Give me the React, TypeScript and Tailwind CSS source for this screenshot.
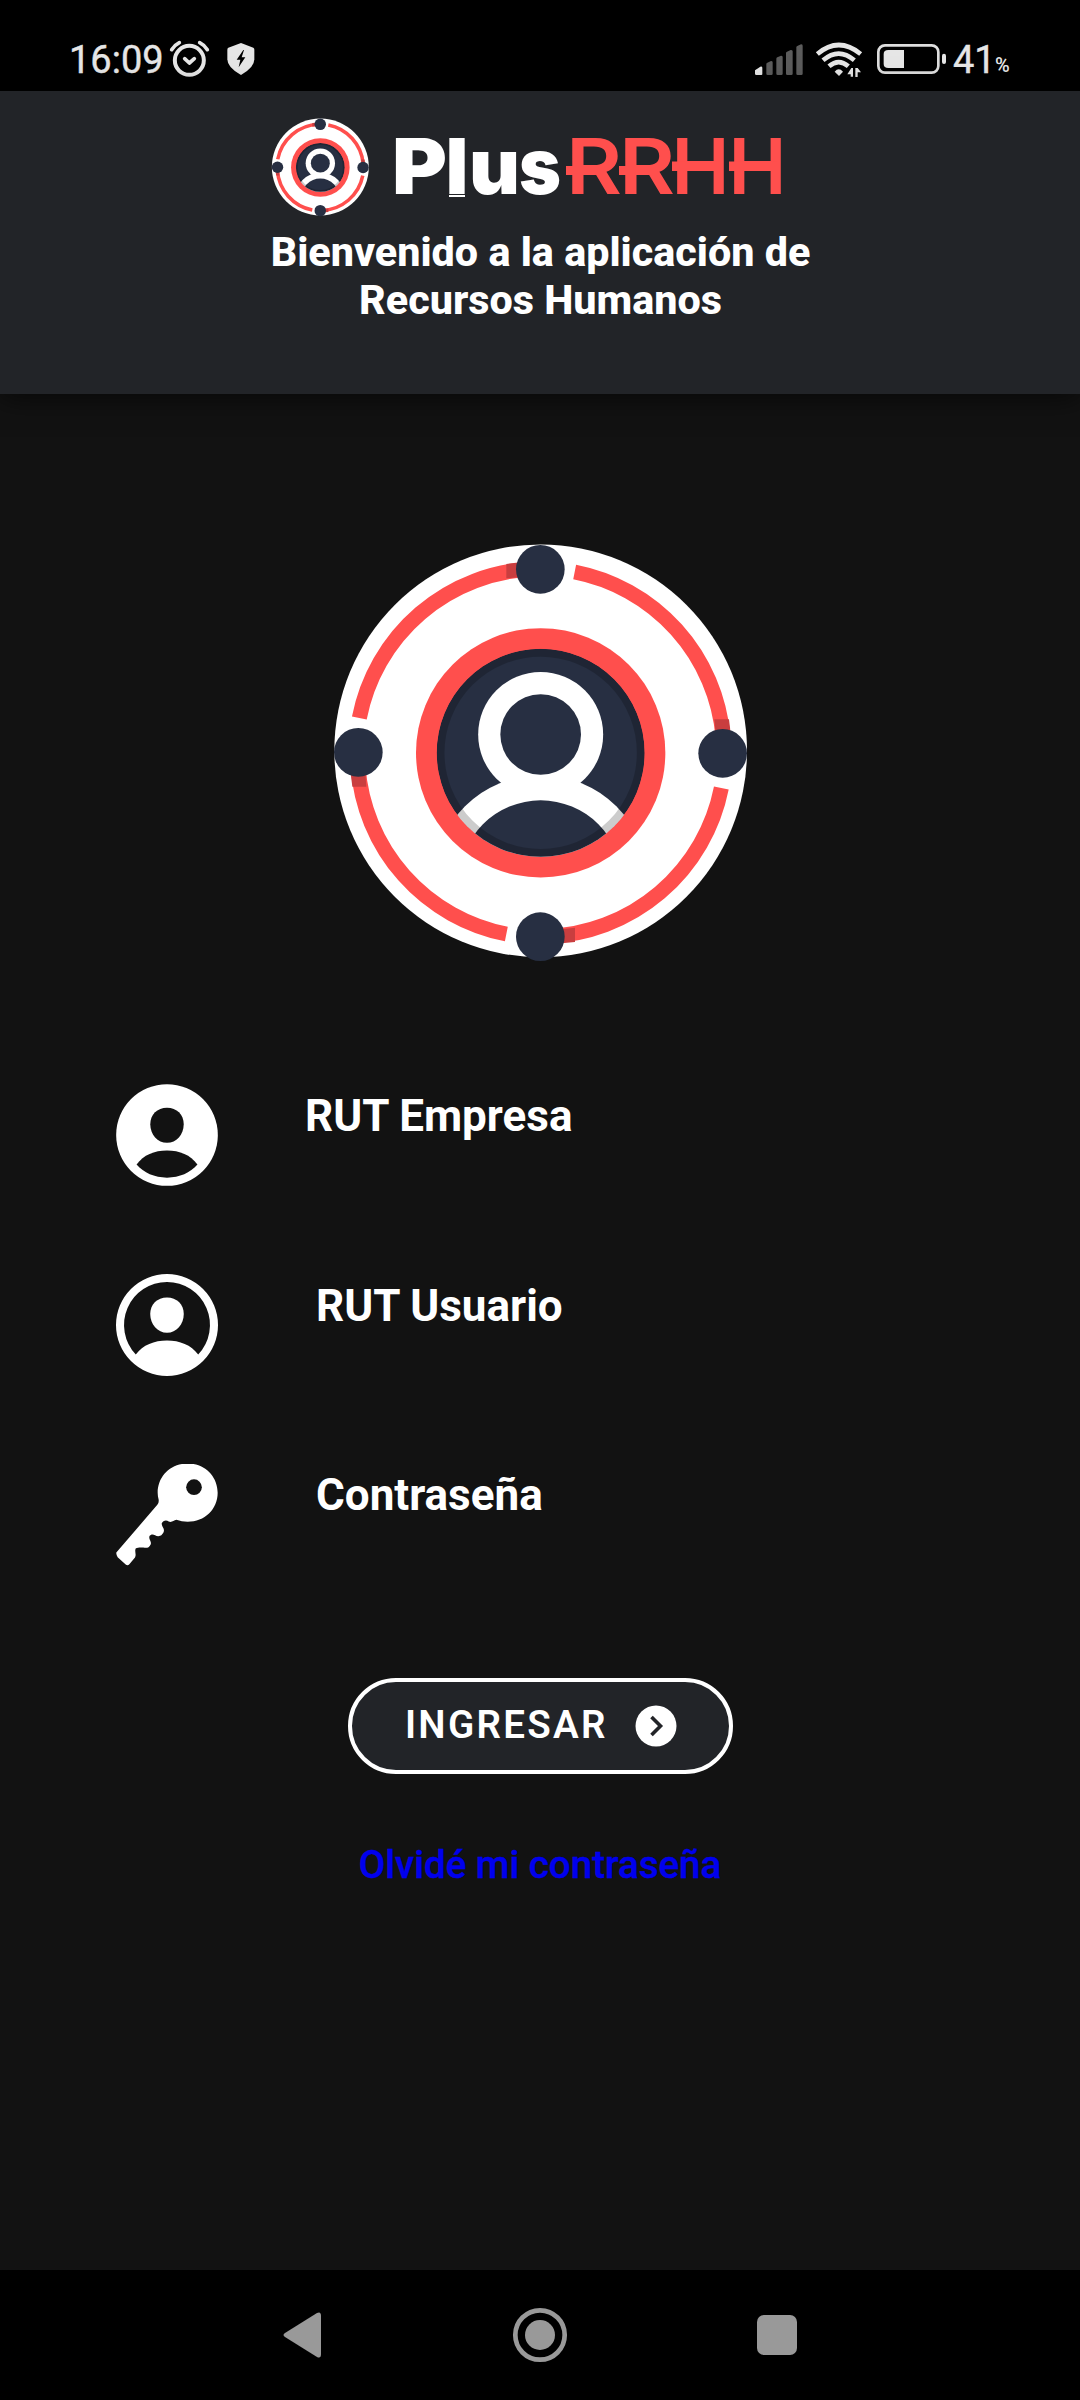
import type { ReactNode } from "react";

function EmblemShapes() {
  return (
    <g>
      <circle cx="662" cy="662.5" r="619" fill="#fff" />
      <g fill="none" stroke="#ff4f4d" strokeWidth="45">
        <path d="M118 564A553 553 0 0 1 640 117" />
        <path d="M764 126A553 553 0 0 1 1209 620" />
        <path d="M1204 774A553 553 0 0 1 680 1219" />
        <path d="M559 1212A553 553 0 0 1 114 710" />
      </g>
      <g fill="#c93e3f">
        <path d="M559 102L600 97V141L559 145Z" />
        <path d="M1183 568H1227L1232 610H1187Z" />
        <path d="M765 1193V1236L724 1240V1198Z" />
        <path d="M92 730H136L139 770H97Z" />
      </g>
      <g fill="#272f42">
        <circle cx="661" cy="118" r="73" />
        <circle cx="1208" cy="670" r="73" />
        <circle cx="661" cy="1220" r="73" />
        <circle cx="115" cy="667" r="73" />
      </g>
      <clipPath id="emblem-core">
        <circle cx="662" cy="668.5" r="312" />
      </clipPath>
      <circle cx="662" cy="668.5" r="374" fill="#ff4f4d" />
      <g clipPath="url(#emblem-core)">
        <circle cx="662" cy="668.5" r="312" fill="#272f42" />
        <circle cx="662" cy="1056" r="321" fill="#fff" />
        <circle cx="662" cy="1056" r="245" fill="#272f42" />
        <circle cx="662" cy="613.5" r="187.5" fill="#fff" />
        <circle cx="662" cy="613.5" r="121" fill="#272f42" />
        <circle cx="662" cy="668.5" r="300" fill="none" stroke="#000" strokeOpacity=".2" strokeWidth="23" />
      </g>
    </g>
  );
}

function Logo() {
  return (
    <svg width="520" height="104" viewBox="268 115 520 104" className="block">
      <g transform="translate(268.5 115.1) scale(.0783)">
        <EmblemShapes />
      </g>
      <g fill="#fff" fontFamily="Inter" fontWeight="900" fontSize="77">
        <text x="392" y="194" textLength="55" lengthAdjust="spacingAndGlyphs">P</text>
        <text x="445.5" y="194" textLength="23" lengthAdjust="spacingAndGlyphs">l</text>
        <text x="469" y="194" textLength="51" lengthAdjust="spacingAndGlyphs">u</text>
        <text x="519" y="194" textLength="42" lengthAdjust="spacingAndGlyphs">s</text>
      </g>
      <rect x="449" y="195" width="16" height="2" fill="#fff" />
      <g fill="#ff4f4d" fontFamily="Inter" fontWeight="600" fontSize="77">
        <text x="566" y="194" textLength="56" lengthAdjust="spacingAndGlyphs">R</text>
        <text x="619" y="194" textLength="56" lengthAdjust="spacingAndGlyphs">R</text>
        <text x="671.5" y="194" textLength="58" lengthAdjust="spacingAndGlyphs">H</text>
        <text x="728.5" y="194" textLength="58" lengthAdjust="spacingAndGlyphs">H</text>
        <rect x="566" y="166" width="36" height="9" />
        <rect x="619" y="166" width="36" height="9" />
        <rect x="672" y="161.500" width="48" height="9.500" />
        <rect x="729" y="161.500" width="48" height="9.500" />
      </g>
    </svg>
  );
}

function StatusBar() {
  return (
    <div className="flex h-[91px] justify-between bg-black pl-[69px] pr-[69px] text-[#e6e6e6]">
      <div className="flex">
        <span className="mt-[36px] w-[100px] text-[38px] leading-[48px] [-webkit-text-stroke:0.4px_#e6e6e6]">16:09</span>
        <svg width="90" height="91" viewBox="357 -60 270 273" fill="none" stroke="#e6e6e6">
          <circle cx="418" cy="121" r="43.5" strokeWidth="12" />
          <path d="M404 116l14 13 15-13" strokeWidth="11" strokeLinecap="round" strokeLinejoin="round" />
          <path d="M365 89q9-14 23-21M472 89q-9-14-23-21" strokeWidth="11" strokeLinecap="round" />
          <path d="M573 69l37 14q3 2 3 6v29q0 25-40 47-41-22-41-47V89q0-4 3-6Z" fill="#e6e6e6" stroke="none" />
          <path d="M580 90l-20 29h11l-5 23 20-30h-11l7-22Z" fill="#000" stroke="none" />
        </svg>
      </div>
      <div className="flex">
        <svg width="200" height="91" viewBox="39 -60 600 273" fill="#e6e6e6">
          <path d="M45 151l16-11q6-1 6 3v20q0 2-3 2H49q-4 0-4-4Z" />
          <g fill="#5c5c5c">
            <path d="M79 132q0-3 3-4l11-5q5 0 5 4v34q0 4-4 4H83q-4 0-4-4Z" />
            <path d="M109 116q0-3 3-4l11-5q5 0 5 4v50q0 4-4 4h-11q-4 0-4-4Z" />
            <path d="M138 99q0-3 3-4l11-5q6 0 6 4v67q0 4-4 4h-12q-4 0-4-4Z" />
            <path d="M169 82q0-3 3-4l11-5q5 0 5 4v84q0 4-4 4h-11q-4 0-4-4Z" />
          </g>
          <g fill="none" stroke="#e6e6e6" strokeWidth="14">
            <path d="M232 102q64-54 130 0" />
            <path d="M249 121q47-40 94 0" />
            <path d="M267 139q29-25 58 0" />
          </g>
          <path d="M284 155q12-14 25 0l-12 13Z" />
          <path d="M339 144v26h-7v-7h-10l12-19ZM346 171v-27h7l10 13h-10v14Z" />
          <rect x="415" y="76" width="180" height="82" rx="20" fill="none" stroke="#dedede" strokeWidth="8" />
          <path d="M445 90h47v54h-47q-14 0-14-12v-30q0-12 14-12Z" />
          <rect x="606" y="101" width="12" height="31" rx="6" />
        </svg>
        <span className="mt-[36px] w-[42px] text-[38px] leading-[48px] [-webkit-text-stroke:0.4px_#e6e6e6]">41</span>
        <span className="mt-[53px] w-[16px] text-[20px] font-medium leading-[24px]">%</span>
      </div>
    </div>
  );
}

function CompanyIcon() {
  return (
    <svg width="102" height="102" viewBox="49 72 304 305">
      <circle cx="201" cy="224.500" r="152" fill="#fff" />
      <path d="M201 143c29 0 50 20 50 49 0 31-22 56-50 56s-50-25-50-56c0-29 21-49 50-49Z" fill="#121212" />
      <path d="M110 313c21-29 53-42 91-42s70 13 91 42c-22 25-53 39-91 39s-69-14-91-39Z" fill="#121212" />
    </svg>
  );
}

function UserIcon() {
  return (
    <svg width="102" height="102" viewBox="49 643 304 304" fill="#fff">
      <path
        fillRule="evenodd"
        d="M201 643a152 152 0 1 0 0 304a152 152 0 1 0 0-304ZM201 667a128 128 0 0 1 93 216c-21-29-55-42-93-42s-72 13-93 42a128 128 0 0 1 93-216Z"
      />
      <path d="M201 713c29 0 50 20 50 49 0 31-22 56-50 56s-50-25-50-56c0-29 21-49 50-49Z" />
    </svg>
  );
}

function KeyIcon() {
  return (
    <svg width="102" height="102" viewBox="49 100.500 304 306">
      <path
        fill="#fff"
        d="M263 99c51 0 90 38 90 88s-39 87-90 87c-12 0-23-2-34-6-8 2-14 9-23 5-6-5-17-4-21 6 1 13 11 15 5 28-4 6-7 10-15 10-11 0-16-11-26-1-5 10 7 16 3 26-5 11-13 11-22 9-9 0-16-1-23 3-4 10 3 16-2 27l-17 20q-5 6-11 1l-24-22q-5-8-4-14L172 223q5-5 4-15c-2-7-3-14-3-21 0-50 39-88 90-88Z"
      />
      <circle cx="282" cy="170" r="23.500" fill="#121212" />
    </svg>
  );
}

function Field({ icon, label }: { icon: ReactNode; label: ReactNode }) {
  return (
    <div className="flex h-[102px] pl-[116px]">
      {icon}
      {label}
    </div>
  );
}

function NavBar() {
  return (
    <div className="flex h-[130px] items-center justify-between bg-black pl-[283px] pr-[283px]">
      <svg width="38" height="46" viewBox="0 0 38 46" fill="#999">
        <path d="M2 21L34 1q4-2 4 3v38q0 5-4 3L2 25q-3-2 0-4Z" />
      </svg>
      <svg width="56" height="56" viewBox="0 0 56 56" className="ml-0.5">
        <circle cx="28" cy="28" r="24.700" fill="none" stroke="#999" strokeWidth="4.700" />
        <circle cx="28" cy="28" r="15" fill="#999" />
      </svg>
      <div className="h-[40px] w-[40px] rounded-[7px] bg-[#999]" />
    </div>
  );
}

export default function App() {
  return (
    <div className="flex h-[2400px] w-[1080px] flex-col overflow-hidden bg-[#121212] font-[Roboto,sans-serif] text-white">
      <StatusBar />
      <header className="h-[303px] bg-[#222428] pt-[24px] shadow-[0_4px_26px_rgba(0,0,0,0.6)]">
        <div className="pl-[268px]">
          <Logo />
        </div>
        <h1 className="mt-[9px] pl-px text-center text-[41.3px] font-extrabold leading-[48px]">
          Bienvenido a la aplicación de
          <br />
          Recursos Humanos
        </h1>
      </header>
      <main className="flex flex-1 flex-col pt-[136px]">
        <svg width="440" height="440" viewBox="0 0 1320 1320" className="mx-auto">
          <EmblemShapes />
        </svg>
        <div className="mt-[114px] flex flex-col gap-[88px] text-[44px] font-bold leading-[44px]">
          <Field icon={<CompanyIcon />} label={<span className="ml-[87px] mt-[10px]">RUT Empresa</span>} />
          <Field icon={<UserIcon />} label={<span className="ml-[98px] mt-[10px]">RUT Usuario</span>} />
          <Field icon={<KeyIcon />} label={<span className="ml-[98px] mt-[9px]">Contraseña</span>} />
        </div>
        <button className="ml-[348px] mt-[112px] flex h-[96px] w-[385px] items-center rounded-full border-4 border-white bg-[#222428] pl-[53px]">
          <span className="-mt-[2px] w-[230px] text-left text-[38.5px] font-semibold leading-[48px] tracking-[2.3px]">INGRESAR</span>
          <svg width="42" height="42" viewBox="0 0 42 42">
            <circle cx="21" cy="21" r="20.500" fill="#fff" />
            <path d="M16.500 12L25.500 21L16.500 30" fill="none" stroke="#222428" strokeWidth="3.600" />
          </svg>
        </button>
        <a className="mt-[67px] text-center text-[38.5px] font-medium leading-[48px] text-[#0000ee] [-webkit-text-stroke:0.4px_#0000ee]">Olvidé mi contraseña</a>
      </main>
      <NavBar />
    </div>
  );
}
